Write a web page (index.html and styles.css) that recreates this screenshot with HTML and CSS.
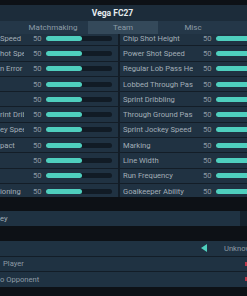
FILE: index.html
```html
<!DOCTYPE html>
<html lang="en">

<head>
    <meta charset="UTF-8">
    <meta name="viewport" content="width=device-width, initial-scale=1.0">
    <title>Vega FC27</title>
    <link rel="stylesheet" href="styles.css">
</head>

<body>
    <div class="screen">
        <div class="title">Vega FC27</div>
        <div class="tabs">
            <div class="tab">Matchmaking</div>
            <div class="tab active">Team</div>
            <div class="tab">Misc</div>
        </div>

        <div class="sliders">
            <div class="slider-list">
                <div class="row">
                    <div class="cell left"><span class="label">Speed</span><span class="value">50</span><div class="bar"><div class="fill"></div></div></div>
                    <div class="cell right"><span class="label">Chip Shot Height</span><span class="value">50</span><div class="bar"><div class="fill"></div></div></div>
                </div>
                <div class="row">
                    <div class="cell left"><span class="label">hot Speed</span><span class="value">50</span><div class="bar"><div class="fill"></div></div></div>
                    <div class="cell right"><span class="label">Power Shot Speed</span><span class="value">50</span><div class="bar"><div class="fill"></div></div></div>
                </div>
                <div class="row">
                    <div class="cell left"><span class="label">n Error</span><span class="value">50</span><div class="bar"><div class="fill"></div></div></div>
                    <div class="cell right"><span class="label">Regular Lob Pass Height</span><span class="value">50</span><div class="bar"><div class="fill"></div></div></div>
                </div>
                <div class="row">
                    <div class="cell left"><span class="label"></span><span class="value">50</span><div class="bar"><div class="fill"></div></div></div>
                    <div class="cell right"><span class="label">Lobbed Through Pass Height</span><span class="value">50</span><div class="bar"><div class="fill"></div></div></div>
                </div>
                <div class="row">
                    <div class="cell left"><span class="label"></span><span class="value">50</span><div class="bar"><div class="fill"></div></div></div>
                    <div class="cell right"><span class="label">Sprint Dribbling</span><span class="value">50</span><div class="bar"><div class="fill"></div></div></div>
                </div>
                <div class="row">
                    <div class="cell left"><span class="label">rint Dribbling</span><span class="value">50</span><div class="bar"><div class="fill"></div></div></div>
                    <div class="cell right"><span class="label">Through Ground Pass Speed</span><span class="value">50</span><div class="bar"><div class="fill"></div></div></div>
                </div>
                <div class="row">
                    <div class="cell left"><span class="label">ey Speed</span><span class="value">50</span><div class="bar"><div class="fill"></div></div></div>
                    <div class="cell right"><span class="label">Sprint Jockey Speed</span><span class="value">50</span><div class="bar"><div class="fill"></div></div></div>
                </div>
                <div class="row">
                    <div class="cell left"><span class="label">pact</span><span class="value">50</span><div class="bar"><div class="fill"></div></div></div>
                    <div class="cell right"><span class="label">Marking</span><span class="value">50</span><div class="bar"><div class="fill"></div></div></div>
                </div>
                <div class="row">
                    <div class="cell left"><span class="label"></span><span class="value">50</span><div class="bar"><div class="fill"></div></div></div>
                    <div class="cell right"><span class="label">Line Width</span><span class="value">50</span><div class="bar"><div class="fill"></div></div></div>
                </div>
                <div class="row">
                    <div class="cell left"><span class="label"></span><span class="value">50</span><div class="bar"><div class="fill"></div></div></div>
                    <div class="cell right"><span class="label">Run Frequency</span><span class="value">50</span><div class="bar"><div class="fill"></div></div></div>
                </div>
                <div class="row">
                    <div class="cell left"><span class="label">ioning</span><span class="value">50</span><div class="bar"><div class="fill"></div></div></div>
                    <div class="cell right"><span class="label">Goalkeeper Ability</span><span class="value">50</span><div class="bar"><div class="fill"></div></div></div>
                </div>
            </div>
        </div>

        <div class="hotkey">
            <div class="hotkey-field">ey</div>
        </div>

        <div class="options">
            <div class="option">
                <span class="arrow"></span>
                <span class="state">Unknown</span>
            </div>
            <div class="option">
                <span class="option-label indent">Player</span>
                <span class="flag"></span>
            </div>
            <div class="option">
                <span class="option-label">o Opponent</span>
                <span class="flag"></span>
            </div>
        </div>
    </div>
</body>

</html>
```

FILE: styles.css
```css
body{
    margin: 0;
    background-color: #0d1116;
    font-family: Roboto, "Liberation Sans", sans-serif;
    overflow: hidden;
}

.screen{
    width: 247px;
    height: 296px;
    padding-top: 5px;
    box-sizing: border-box;
    overflow: hidden;
}

.title{
    height: 16px;
    line-height: 16px;
    background-color: #1c2c3a;
    color: #e6ecef;
    font-size: 8.5px;
    font-weight: bold;
    text-align: center;
    padding-right: 22px;
}

.tabs{
    display: flex;
    height: 13px;
    background-color: #243748;
    padding-left: 18px;
}

.tab{
    width: 70px;
    line-height: 13px;
    text-align: center;
    font-size: 8px;
    color: #8d9ca7;
}

.tab.active{
    background-color: #34495a;
}

.sliders{
    height: 163px;
    overflow: hidden;
}

.slider-list{
    display: flex;
    flex-direction: column;
    gap: 1px;
    margin-top: -3px;
    background-color: #131d27;
}

.row{
    display: grid;
    grid-template-columns: 118px 1fr;
    column-gap: 2px;
    height: 14.3px;
}

.cell{
    display: flex;
    align-items: center;
    background-color: #203242;
    overflow: hidden;
    min-width: 0;
}

.right{
    padding-left: 3px;
}

.label{
    flex: none;
    overflow: hidden;
    white-space: nowrap;
    font-size: 7.6px;
    color: #a2aeb7;
}

.left .label{
    width: 24px;
    margin-right: 9px;
}

.right .label{
    width: 70px;
    margin-right: 10px;
}

.value{
    flex: none;
    width: 13px;
    font-size: 7.6px;
    color: #8e9ba5;
}

.bar{
    flex: none;
    width: 66px;
    height: 5px;
    border-radius: 3px;
    background-color: #111b25;
}

.fill{
    width: 36px;
    height: 100%;
    border-radius: 3px;
    background-color: #4fcfbe;
}

.hotkey{
    display: flex;
    margin-top: 14px;
    height: 15px;
    background-color: #15212c;
}

.hotkey-field{
    width: 240px;
    line-height: 15px;
    background-color: #1f3242;
    font-size: 7.6px;
    color: #a2aeb7;
}

.options{
    display: flex;
    flex-direction: column;
    gap: 1px;
    margin-top: 15px;
    background-color: #131d27;
}

.option{
    display: flex;
    align-items: center;
    height: 14.5px;
    background-color: #1f3242;
    font-size: 7.6px;
    color: #8e9ba5;
}

.arrow{
    width: 0;
    height: 0;
    margin-left: 201px;
    border-top: 4px solid transparent;
    border-bottom: 4px solid transparent;
    border-right: 6px solid #4fcfbe;
}

.state{
    margin-left: 17px;
    white-space: nowrap;
}

.option-label.indent{
    padding-left: 3px;
}

.flag{
    width: 2px;
    height: 4px;
    margin-left: auto;
    background-color: #b8374a;
}
```
